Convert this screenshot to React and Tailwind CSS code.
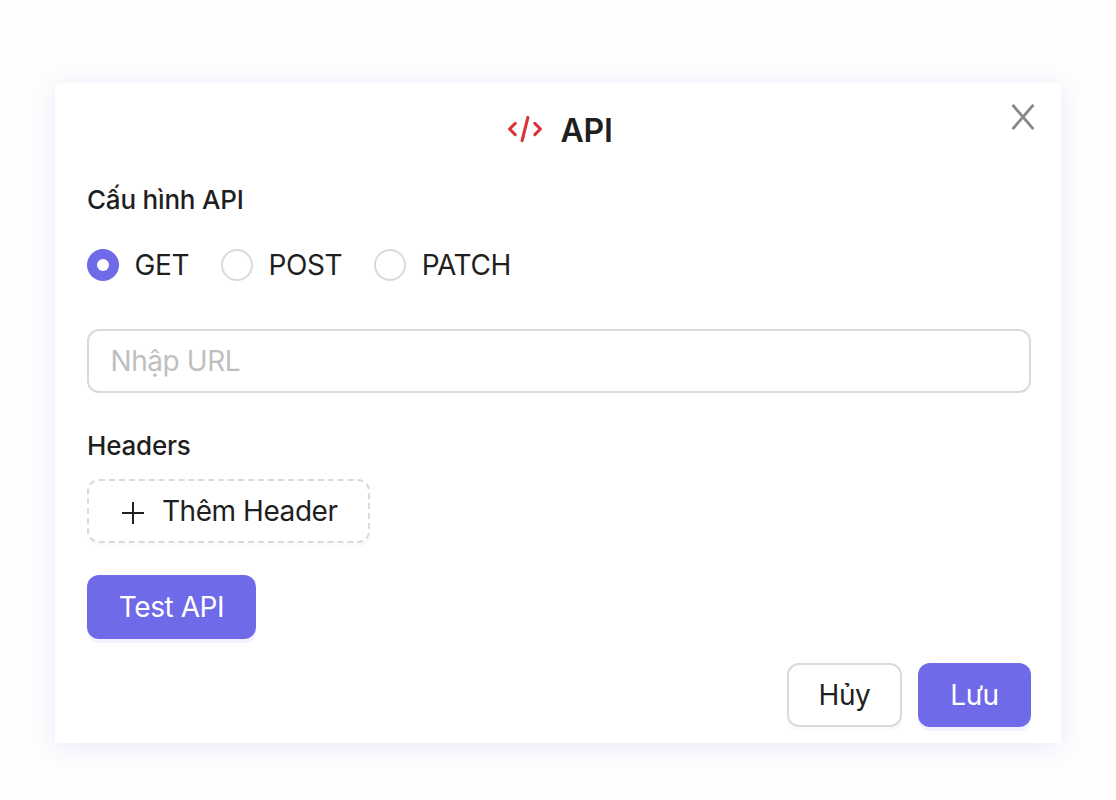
import React, { useState } from "react";

const METHODS = ["GET", "POST", "PATCH"];

function CodeIcon() {
  return (
    <svg width="36" height="28" viewBox="0 0 36 28" fill="none" stroke="#dc3338" strokeWidth="3.1" strokeLinecap="round" aria-hidden="true">
      <path d="M8.2 8.4 2.6 14 8.2 19.6" strokeLinejoin="round" />
      <path d="M27.8 8.4 33.4 14 27.8 19.6" strokeLinejoin="round" />
      <path d="M20.9 2.4 15.1 25.6" />
    </svg>
  );
}

function CloseIcon() {
  return (
    <svg width="24" height="26" viewBox="0 0 24 26" fill="none" stroke="#888888" strokeWidth="2.9" aria-hidden="true">
      <path d="M1.6 0.9 22.4 25.1M22.4 0.9 1.6 25.1" />
    </svg>
  );
}

function PlusIcon() {
  return (
    <svg width="22" height="22" viewBox="0 0 22 22" fill="none" stroke="#1f1f1f" strokeWidth="2" aria-hidden="true">
      <path d="M11 0v22M0 11h22" />
    </svg>
  );
}

function Radio({ label, checked, onSelect }) {
  return (
    <label className="flex h-8 cursor-pointer items-center gap-[15.5px]">
      <input type="radio" name="method" checked={checked} onChange={onSelect} className="sr-only" />
      {checked ? (
        <span className="flex size-8 shrink-0 items-center justify-center rounded-full bg-[#6f6ae8]">
          <span className="size-3 rounded-full bg-white" />
        </span>
      ) : (
        <span className="size-8 shrink-0 rounded-full border-2 border-[#d9d9de] bg-white" />
      )}
      <span>{label}</span>
    </label>
  );
}

export default function App() {
  const [method, setMethod] = useState("GET");
  return (
    <div className="h-[800px] w-[1116px] overflow-hidden bg-[#fefefe] pt-[83px] pl-[55px] font-['Inter','Noto_Sans',sans-serif] text-[28px] leading-8 tracking-[-0.42px] text-[#1f1f1f]">
      <div className="relative flex h-[660px] w-[1006px] flex-col bg-white pr-[30px] pl-8 shadow-[0_4px_24px_rgba(111,106,232,0.15)]">
        <button aria-label="Close" className="absolute top-[21px] right-[26px]">
          <CloseIcon />
        </button>

        <div className="mt-[26px] flex h-10 items-center justify-center gap-[17px] pl-0.5">
          <CodeIcon />
          <h1 className="mt-1 text-[32px] leading-10 font-semibold tracking-[-0.2px]">API</h1>
        </div>

        <h2 className="mt-[35px] text-[26px] leading-8 font-[550] tracking-[-0.2px]">Cấu hình API</h2>

        <div className="mt-[33px] flex gap-8">
          {METHODS.map((m) => (
            <Radio key={m} label={m} checked={method === m} onSelect={() => setMethod(m)} />
          ))}
        </div>

        <input
          placeholder="Nhập URL"
          className="mt-12 h-16 w-full shrink-0 rounded-xl border-2 border-[#d9d9de] bg-white px-[21.5px] tracking-[-0.42px] outline-none placeholder:text-[#bfbfbf]"
        />

        <h2 className="mt-[37px] text-[26px] leading-8 font-[550] tracking-[-0.2px]">Headers</h2>

        <button className="mt-[17px] flex h-16 w-[283px] shrink-0 items-center rounded-xl border-2 border-dashed border-[#d9d9de] bg-white pl-[33px] tracking-[-0.45px] shadow-[0_4px_0_rgba(0,0,0,0.02)]">
          <span className="mt-[3px]">
            <PlusIcon />
          </span>
          <span className="ml-[18px] whitespace-nowrap">Thêm Header</span>
        </button>

        <button className="mt-8 h-16 w-[169px] shrink-0 rounded-xl bg-[#6f6ae8] tracking-[-0.42px] whitespace-nowrap text-white shadow-[0_4px_0_rgba(111,80,255,0.08)]">
          Test API
        </button>

        <div className="mt-6 flex justify-end gap-4">
          <button className="h-16 w-[115px] rounded-xl border-2 border-[#d9d9de] bg-white tracking-[-0.42px] shadow-[0_4px_0_rgba(0,0,0,0.02)]">
            Hủy
          </button>
          <button className="h-16 w-[113px] rounded-xl bg-[#6f6ae8] tracking-[-0.42px] text-white shadow-[0_4px_0_rgba(111,80,255,0.08)]">
            Lưu
          </button>
        </div>
      </div>
    </div>
  );
}
